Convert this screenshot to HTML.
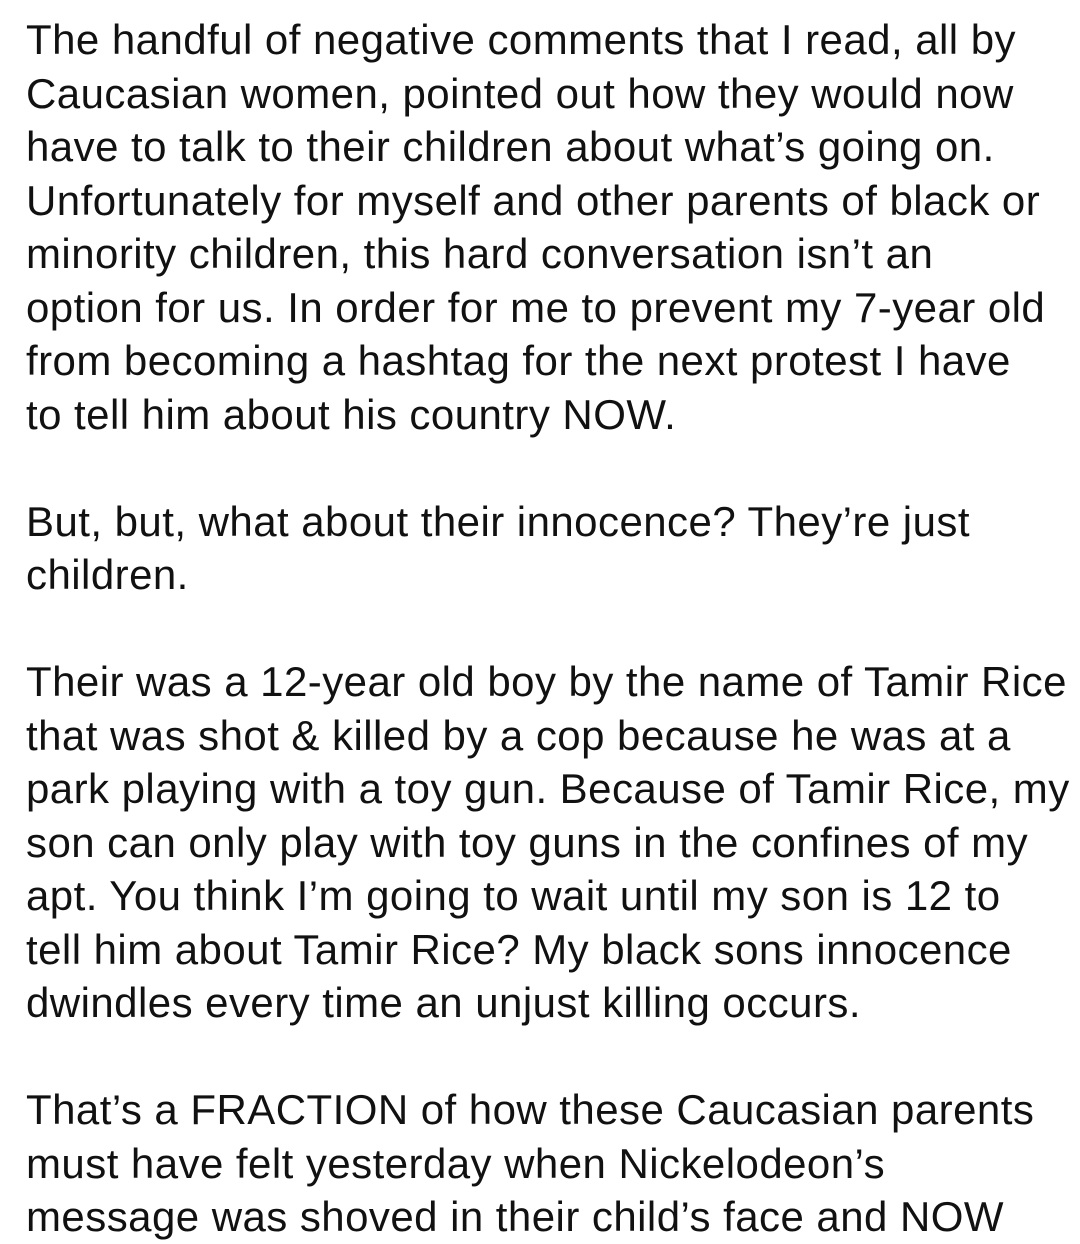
<!DOCTYPE html>
<html><head><meta charset="utf-8"><style>
html,body{margin:0;padding:0;background:#fff;width:1080px;height:1201px;overflow:hidden}
.t{position:absolute;left:26px;top:13px;font-family:"Liberation Sans",sans-serif;font-size:42px;line-height:53.5px;color:#111;white-space:pre;letter-spacing:0.45px}
</style></head><body><div class="t">The handful of negative comments that I read, all by
Caucasian women, pointed out how they would now
have to talk to their children about what’s going on.
Unfortunately for myself and other parents of black or
minority children, this hard conversation isn’t an
option for us. In order for me to prevent my 7-year old
from becoming a hashtag for the next protest I have
to tell him about his country NOW.

But, but, what about their innocence? They’re just
children.

Their was a 12-year old boy by the name of Tamir Rice
that was shot &amp; killed by a cop because he was at a
park playing with a toy gun. Because of Tamir Rice, my
son can only play with toy guns in the confines of my
apt. You think I’m going to wait until my son is 12 to
tell him about Tamir Rice? My black sons innocence
dwindles every time an unjust killing occurs.

That’s a FRACTION of how these Caucasian parents
must have felt yesterday when Nickelodeon’s
message was shoved in their child’s face and NOW</div></body></html>
